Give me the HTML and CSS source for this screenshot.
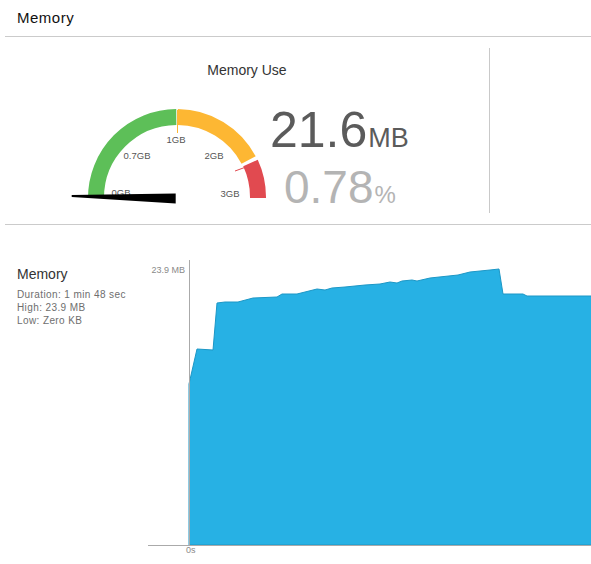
FILE: index.html
```html
<!DOCTYPE html>
<html>
<head>
<meta charset="utf-8">
<link rel="stylesheet" href="styles.css">
</head>
<body>
<div class="header">Memory</div>
<div class="top">
  <div class="gauge-panel">
    <div class="gauge-title">Memory Use</div>
    <div class="gauge-row">
      <svg class="gauge" width="200" height="110" viewBox="0 0 200 110">
        <path d="M26 100 A81 81 0 0 1 106.3 19" fill="none" stroke="#5dbf58" stroke-width="16"/>
        <path d="M107.8 19 A81 81 0 0 1 178.6 62" fill="none" stroke="#fdb733" stroke-width="16"/>
        <path d="M180.5 65 A81 81 0 0 1 188 100" fill="none" stroke="#e14a50" stroke-width="16"/>
        <line x1="107.5" y1="12" x2="107.5" y2="35" stroke="#fdb733" stroke-width="1"/>
        <line x1="165" y1="73" x2="176" y2="69" stroke="#e14a50" stroke-width="1"/>
        <g class="glabel">
          <text x="106" y="45" text-anchor="middle">1GB</text>
          <text x="67" y="61" text-anchor="middle">0.7GB</text>
          <text x="144" y="61" text-anchor="middle">2GB</text>
          <text x="51" y="98" text-anchor="middle">0GB</text>
          <text x="160" y="99" text-anchor="middle">3GB</text>
        </g>
        <polygon points="1.7,97 105.7,95.5 105.7,105.5 1.7,99" fill="#000"/>
      </svg>
      <div class="numbers">
        <div class="big">21.6<span class="unit">MB</span></div>
        <div class="pct">0.78<span class="pct-unit">%</span></div>
      </div>
    </div>
  </div>
  <div class="side"></div>
</div>
<div class="bottom">
  <div class="info">
    <div class="info-title">Memory</div>
    <div class="info-lines">
      <div>Duration: 1 min 48 sec</div>
      <div>High: 23.9 MB</div>
      <div>Low: Zero KB</div>
    </div>
  </div>
  <svg class="chart" width="451" height="309" viewBox="0 0 451 309">
    <polygon points="49,290 49,129 57,94 73,95 77,48 85,47 98,47 113,43 137,42 142,39 157,39 177,34 185,35 192,33 205,32 225,30 240,29 250,27 257,28 262,26 272,25 277,26 290,23 318,20 330,17 340,16 350,15 359,14 363,39 383,39 387,41 452,41 452,290" fill="#27b1e4" stroke="#1c97c6" stroke-width="1"/>
    <line x1="49.5" y1="5" x2="49.5" y2="290" stroke="#aaa" stroke-width="1"/>
    <line x1="8" y1="290.5" x2="451" y2="290.5" stroke="#aaa" stroke-width="1"/>
    <text class="axis" x="45" y="17.7" text-anchor="end">23.9 MB</text>
    <text class="axis" x="46" y="298">0s</text>
  </svg>
</div>
</body>
</html>
```

FILE: styles.css
```css
html, body {
  margin: 0;
  padding: 0;
  background: #fff;
  overflow: hidden;
}
body {
  font-family: "Liberation Sans", Arial, sans-serif;
  color: #222;
  width: 591px;
  height: 564px;
}
.header {
  height: 26px;
  padding-top: 10px;
  padding-left: 12px;
  margin-left: 5px;
  font-size: 15px;
  letter-spacing: 0.5px;
  line-height: 16px;
  color: #111;
  border-bottom: 1px solid #cbcbcb;
}
.top {
  display: flex;
  height: 187px;
  margin-left: 5px;
  border-bottom: 1px solid #cbcbcb;
}
.gauge-panel {
  box-sizing: border-box;
  width: 485px;
  margin: 11px 0;
  border-right: 1px solid #c9c9c9;
  padding-top: 14px;
}
.gauge-title {
  text-align: center;
  font-size: 14px;
  line-height: 16px;
  color: #333;
}
.gauge-row {
  display: flex;
  align-items: flex-start;
  margin-top: 20px;
  padding-left: 65px;
}
.gauge {
  display: block;
  flex: none;
}
.glabel text {
  font-family: "Liberation Sans", Arial, sans-serif;
  font-size: 9.5px;
  fill: #555;
}
.numbers {
  margin-top: 7px;
}
.big {
  font-size: 50px;
  line-height: 50px;
  color: #5b5b5b;
  white-space: nowrap;
}
.unit {
  font-size: 27px;
  margin-left: 1px;
}
.pct {
  margin-top: 1px;
  margin-left: 14px;
  font-size: 46px;
  line-height: 46px;
  color: #b4b4b4;
  white-space: nowrap;
}
.pct-unit {
  font-size: 24px;
  margin-left: 1px;
}
.bottom {
  display: flex;
}
.info {
  box-sizing: border-box;
  width: 140px;
  padding-left: 17px;
  padding-top: 41px;
}
.info-title {
  font-size: 14px;
  line-height: 16px;
  color: #333;
}
.info-lines {
  margin-top: 6px;
  font-size: 10px;
  line-height: 13px;
  letter-spacing: 0.4px;
  color: #6e6e6e;
  white-space: nowrap;
}
.chart {
  display: block;
  margin-top: 30px;
  flex: none;
}
.axis {
  font-family: "Liberation Sans", Arial, sans-serif;
  font-size: 9px;
  fill: #8a8a8a;
}
```
